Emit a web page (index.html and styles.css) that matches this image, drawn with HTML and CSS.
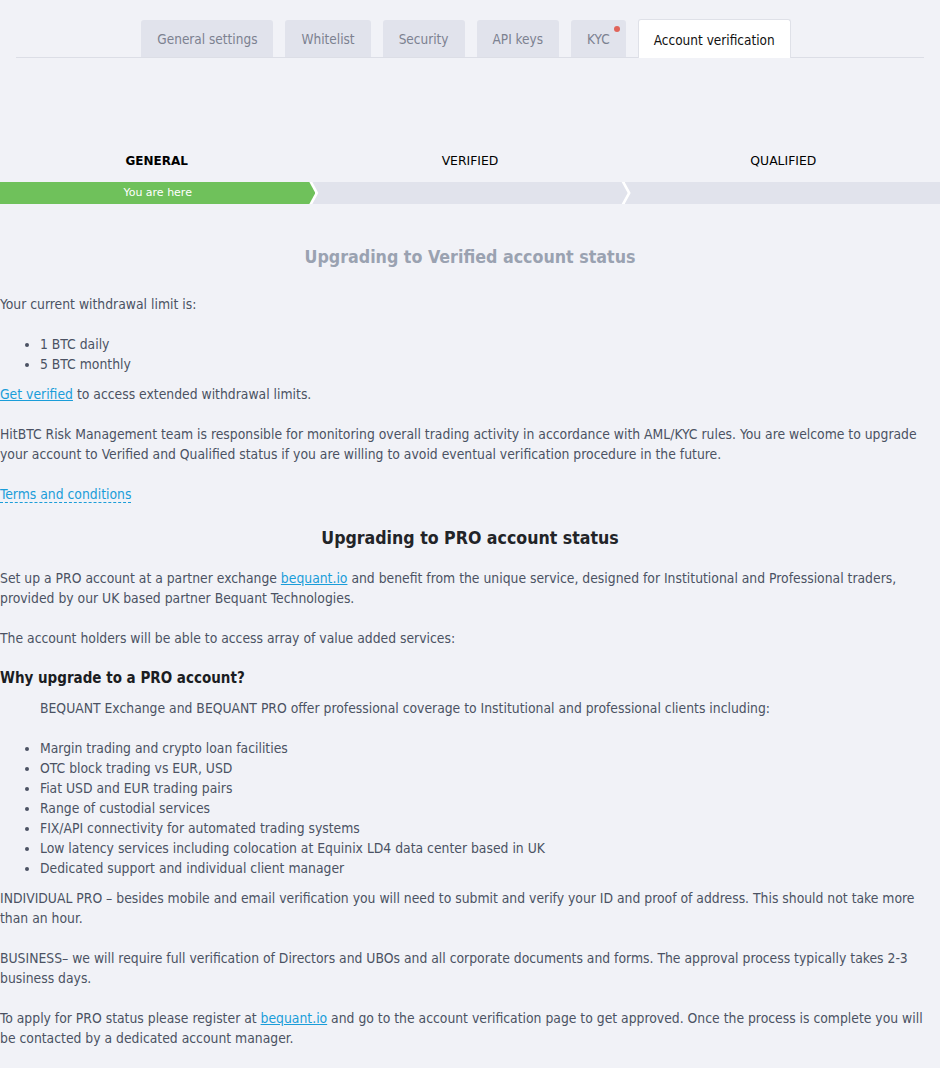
FILE: index.html
```html
<!DOCTYPE html>
<html>
<head>
<meta charset="utf-8">
<link rel="stylesheet" href="styles.css">
</head>
<body>
<div class="page">
  <nav class="tabs">
    <a class="tab">General settings</a>
    <a class="tab">Whitelist</a>
    <a class="tab">Security</a>
    <a class="tab">API keys</a>
    <a class="tab tab-kyc">KYC<span class="dot"></span></a>
    <a class="tab active">Account verification</a>
  </nav>

  <div class="steps">
    <div class="step-labels">
      <div class="step-label current">GENERAL</div>
      <div class="step-label">VERIFIED</div>
      <div class="step-label">QUALIFIED</div>
    </div>
    <div class="bar">
      <div class="seg seg-first done">You are here</div>
      <div class="seg seg-mid"></div>
      <div class="seg seg-last"></div>
    </div>
  </div>

  <main class="content">
    <h2 class="title-muted">Upgrading to Verified account status</h2>
    <p>Your current withdrawal limit is:</p>
    <ul class="list">
      <li>1 BTC daily</li>
      <li>5 BTC monthly</li>
    </ul>
    <p class="tight"><a class="link" href="#">Get verified</a> to access extended withdrawal limits.</p>
    <p>HitBTC Risk Management team is responsible for monitoring overall trading activity in accordance with AML/KYC rules. You are welcome to upgrade your account to Verified and Qualified status if you are willing to avoid eventual verification procedure in the future.</p>
    <p><a class="dotted" href="#">Terms and conditions</a></p>

    <h2 class="title-dark">Upgrading to PRO account status</h2>
    <p>Set up a PRO account at a partner exchange <a class="link" href="#">bequant.io</a> and benefit from the unique service, designed for Institutional and Professional traders, provided by our UK based partner Bequant Technologies.</p>
    <p>The account holders will be able to access array of value added services:</p>
    <h3 class="subtitle">Why upgrade to a PRO account?</h3>
    <p class="indent">BEQUANT Exchange and BEQUANT PRO offer professional coverage to Institutional and professional clients including:</p>
    <ul class="list list-pro">
      <li>Margin trading and crypto loan facilities</li>
      <li>OTC block trading vs EUR, USD</li>
      <li>Fiat USD and EUR trading pairs</li>
      <li>Range of custodial services</li>
      <li>FIX/API connectivity for automated trading systems</li>
      <li>Low latency services including colocation at Equinix LD4 data center based in UK</li>
      <li>Dedicated support and individual client manager</li>
    </ul>
    <p class="tight">INDIVIDUAL PRO – besides mobile and email verification you will need to submit and verify your ID and proof of address. This should not take more than an hour.</p>
    <p>BUSINESS– we will require full verification of Directors and UBOs and all corporate documents and forms. The approval process typically takes 2-3 business days.</p>
    <p>To apply for PRO status please register at <a class="link" href="#">bequant.io</a> and go to the account verification page to get approved. Once the process is complete you will be contacted by a dedicated account manager.</p>
  </main>
</div>
</body>
</html>
```

FILE: styles.css
```css
html, body {
  margin: 0;
  padding: 0;
  background: #f1f2f7;
}
body {
  font-family: "DejaVu Sans Condensed", "DejaVu Sans", sans-serif;
  font-size: 13.8px;
  line-height: 20px;
  color: #4b5263;
}
.page {
  width: 940px;
}
.tabs {
  display: flex;
  justify-content: center;
  gap: 12px;
  margin: 0 16px;
  padding: 20px 8px 0 0;
  border-bottom: 1px solid #dcdee6;
  height: 37px;
  box-sizing: content-box;
}
.tab {
  display: flex;
  align-items: center;
  padding: 0 16px;
  height: 37px;
  background: #e1e3ec;
  color: #7c8190;
  border-radius: 3px 3px 0 0;
  position: relative;
  text-decoration: none;
  font-size: 13.5px;
}
.tab.active {
  background: #ffffff;
  color: #111111;
  margin-top: -1px;
  border: 1px solid #dfe1e8;
  border-bottom: none;
  box-sizing: border-box;
  height: 39px;
  margin-bottom: -1px;
  padding: 1px 15px 0;
}
.dot {
  position: absolute;
  right: 6px;
  top: 6px;
  width: 6px;
  height: 6px;
  border-radius: 50%;
  background: #e0645a;
}
.steps {
  margin-top: 93px;
}
.step-labels {
  display: flex;
}
.step-label {
  flex: 1;
  text-align: center;
  font-family: "DejaVu Sans", sans-serif;
  font-size: 12.4px;
  color: #000;
  line-height: 20px;
}
.step-label.current {
  font-weight: bold;
  font-size: 12px;
}
.bar {
  display: flex;
  height: 22px;
  margin-top: 11px;
  background: #ffffff;
}
.seg {
  flex: 1;
  background: #e1e3ec;
  display: flex;
  align-items: center;
  justify-content: center;
  color: #fff;
  font-family: "DejaVu Sans", sans-serif;
  font-size: 11px;
}
.seg.done {
  background: #6fc15b;
}
.seg-first {
  clip-path: polygon(0 0, calc(100% - 6px) 0, 100% 50%, calc(100% - 6px) 100%, 0 100%);
}
.seg-mid {
  margin-left: -3px;
  clip-path: polygon(0 0, calc(100% - 6px) 0, 100% 50%, calc(100% - 6px) 100%, 0 100%, 6px 50%);
}
.seg-last {
  margin-left: -3px;
  clip-path: polygon(0 0, 100% 0, 100% 100%, 0 100%, 6px 50%);
}
.content {
  padding: 0;
}
.content p {
  margin: 20px 0;
}
.content p.tight {
  margin-top: 0;
}
.title-muted {
  margin: 41px 0 0;
  text-align: center;
  font-size: 17.7px;
  line-height: 24px;
  font-weight: bold;
  color: #9aa2b1;
}
.title-muted + p {
  margin-top: 25px;
}
.title-dark {
  margin: 22px 0 0;
  text-align: center;
  font-size: 17.6px;
  line-height: 24px;
  font-weight: bold;
  color: #222428;
}
.content .title-dark + p {
  margin-top: 18px;
}
.subtitle {
  margin: 0;
  font-size: 15px;
  line-height: 20px;
  font-weight: bold;
  color: #1b1d22;
}
.indent {
  padding-left: 40px;
}
.content p.indent {
  margin-top: 10px;
}
.list {
  margin: 0 0 10px;
  padding-left: 40px;
}
.list li {
  line-height: 20px;
}
.link {
  color: #1a9dd9;
  text-decoration: underline;
}
.dotted {
  color: #1a9dd9;
  text-decoration: none;
  border-bottom: 1px dashed #1a9dd9;
}
```
